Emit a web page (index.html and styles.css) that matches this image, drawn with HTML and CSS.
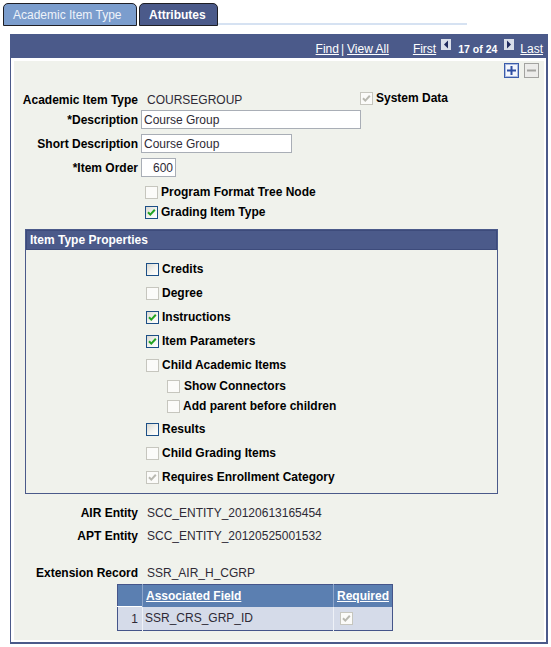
FILE: index.html
```html
<!DOCTYPE html>
<html>
<head>
<meta charset="utf-8">
<title>Attributes</title>
<link rel="stylesheet" href="styles.css">
</head>
<body>
<div class="tabs">
  <div class="tab inactive">Academic Item Type</div>
  <div class="tab active">Attributes</div>
  <div class="tabline"></div>
</div>
<div class="panel">
  <div class="navbar">
    <a class="lnk">Find</a><span class="sep">|</span><a class="lnk">View All</a>
    <a class="lnk first">First</a>
    <span class="arrow prev"><svg width="10" height="11" viewBox="0 0 10 11"><rect x="0" y="0" width="10" height="11" fill="#d9dee9"/><path d="M3 5.5 L7 1.5 L7 9.5 Z" fill="#1f2a5e"/></svg></span>
    <b class="count">17 of 24</b>
    <span class="arrow next"><svg width="10" height="11" viewBox="0 0 10 11"><rect x="0" y="0" width="10" height="11" fill="#d9dee9"/><path d="M7 5.5 L3 1.5 L3 9.5 Z" fill="#1f2a5e"/></svg></span>
    <a class="lnk last">Last</a>
  </div>
  <div class="frame">
    <div class="content">
      <div class="tools">
        <span class="btn add"><svg width="15" height="15" viewBox="0 0 15 15"><rect x="0.5" y="0.5" width="14" height="14" fill="#f4f7fd" stroke="#3b5cab"/><rect x="1.5" y="1.5" width="12" height="12" fill="none" stroke="#aebde0"/><rect x="3" y="6.5" width="9" height="2" fill="#2f4fa2"/><rect x="6.5" y="3" width="2" height="9" fill="#2f4fa2"/></svg></span>
        <span class="btn del"><svg width="15" height="15" viewBox="0 0 15 15"><rect x="0.5" y="0.5" width="14" height="14" fill="#ececea" stroke="#a3a3a0"/><rect x="3" y="6.5" width="9" height="2" fill="#a3a3a0"/></svg></span>
      </div>

      <div class="r1">
        <span class="lbl">Academic Item Type</span>
        <span class="val wide">COURSEGROUP</span>
        <span class="sys">
          <span class="cb dis"><svg width="11" height="11" viewBox="0 0 11 11"><path d="M2 5.2 L4.3 7.6 L8.8 2.8" fill="none" stroke="#b9b9b1" stroke-width="2"/></svg></span>
          <span class="cbl">System Data</span>
        </span>
      </div>

      <div class="irow first-in">
        <span class="lbl">*Description</span>
        <input class="inp desc" type="text" value="Course Group">
      </div>
      <div class="irow">
        <span class="lbl">Short Description</span>
        <input class="inp short" type="text" value="Course Group">
      </div>
      <div class="irow">
        <span class="lbl">*Item Order</span>
        <input class="inp order" type="text" value="600">
      </div>

      <div class="crow first-c">
        <span class="cb dis"></span>
        <span class="cbl">Program Format Tree Node</span>
      </div>
      <div class="crow">
        <span class="cb en"><svg width="11" height="11" viewBox="0 0 11 11"><path d="M2 5.2 L4.3 7.6 L8.8 2.8" fill="none" stroke="#22a422" stroke-width="2"/></svg></span>
        <span class="cbl">Grading Item Type</span>
      </div>

      <div class="box">
        <div class="boxhead">Item Type Properties</div>
        <div class="boxbody">
          <div class="prow">
            <span class="cb en"></span>
            <span class="cbl">Credits</span>
          </div>
          <div class="prow">
            <span class="cb dis"></span>
            <span class="cbl">Degree</span>
          </div>
          <div class="prow">
            <span class="cb en"><svg width="11" height="11" viewBox="0 0 11 11"><path d="M2 5.2 L4.3 7.6 L8.8 2.8" fill="none" stroke="#22a422" stroke-width="2"/></svg></span>
            <span class="cbl">Instructions</span>
          </div>
          <div class="prow">
            <span class="cb en"><svg width="11" height="11" viewBox="0 0 11 11"><path d="M2 5.2 L4.3 7.6 L8.8 2.8" fill="none" stroke="#22a422" stroke-width="2"/></svg></span>
            <span class="cbl">Item Parameters</span>
          </div>
          <div class="prow">
            <span class="cb dis"></span>
            <span class="cbl">Child Academic Items</span>
          </div>
          <div class="prow sub show">
            <span class="cb dis"></span>
            <span class="cbl wide-gap">Show Connectors</span>
          </div>
          <div class="prow sub addp">
            <span class="cb dis"></span>
            <span class="cbl">Add parent before children</span>
          </div>
          <div class="prow">
            <span class="cb en"></span>
            <span class="cbl">Results</span>
          </div>
          <div class="prow">
            <span class="cb dis"></span>
            <span class="cbl">Child Grading Items</span>
          </div>
          <div class="prow">
            <span class="cb dis"><svg width="11" height="11" viewBox="0 0 11 11"><path d="M2 5.2 L4.3 7.6 L8.8 2.8" fill="none" stroke="#b9b9b1" stroke-width="2"/></svg></span>
            <span class="cbl">Requires Enrollment Category</span>
          </div>
        </div>
      </div>

      <div class="drow air">
        <span class="lbl">AIR Entity</span>
        <span class="val">SCC_ENTITY_20120613165454</span>
      </div>
      <div class="drow apt">
        <span class="lbl">APT Entity</span>
        <span class="val">SCC_ENTITY_20120525001532</span>
      </div>
      <div class="drow ext">
        <span class="lbl">Extension Record</span>
        <span class="val">SSR_AIR_H_CGRP</span>
      </div>

      <table class="grid">
        <colgroup>
          <col class="col-num">
          <col class="col-field">
          <col class="col-req">
        </colgroup>
        <tr class="ghead">
          <th class="cnum"></th>
          <th class="cfield"><a class="hl">Associated Field</a></th>
          <th class="creq"><a class="hl">Required</a></th>
        </tr>
        <tr class="grow">
          <td class="cnum">1</td>
          <td class="cfield">SSR_CRS_GRP_ID</td>
          <td class="creq"><span class="cb dis"><svg width="11" height="11" viewBox="0 0 11 11"><path d="M2 5.2 L4.3 7.6 L8.8 2.8" fill="none" stroke="#b9b9b1" stroke-width="2"/></svg></span></td>
        </tr>
      </table>
    </div>
  </div>
</div>
</body>
</html>
```

FILE: styles.css
```css
body {
  margin: 0;
  background: #ffffff;
  font-family: "Liberation Sans", Arial, sans-serif;
  font-size: 12px;
  color: #000000;
  width: 551px;
}

/* Tabs */
.tabs {
  display: flex;
  align-items: flex-end;
  padding: 3px 0 0 3px;
  height: 23px;
}
.tab {
  box-sizing: border-box;
  height: 23px;
  border: 1px solid #1e1e24;
  border-radius: 5px 5px 0 0;
  line-height: 19px;
  padding: 2px 0 0 9px;
  white-space: nowrap;
}
.tab.inactive {
  width: 134px;
  background: #7b9dcd;
  color: #eef3fa;
}
.tab.active {
  width: 79px;
  margin-left: 2px;
  background: #4b5a8a;
  color: #ffffff;
  font-weight: bold;
}
.tabline {
  width: 249px;
  height: 2px;
  margin-bottom: 1px;
  background: #d6e2f2;
}

/* Panel */
.panel {
  margin: 8px 3px 0 10px;
}
.navbar {
  box-sizing: border-box;
  height: 24px;
  background: #4b5a8a;
  display: flex;
  justify-content: flex-end;
  align-items: flex-start;
  padding: 5px 5px 0 0;
  color: #ffffff;
  line-height: 15px;
}
.lnk, .sep, .count {
  margin-top: 3px;
}
.lnk {
  color: #ffffff;
  text-decoration: underline;
}
.sep {
  margin-left: 2px;
  margin-right: 3px;
}
.first {
  margin-left: 24px;
}
.arrow {
  display: block;
  width: 10px;
  height: 11px;
}
.arrow.prev {
  margin-left: 5px;
}
.arrow svg {
  display: block;
}
.count {
  font-weight: bold;
  font-size: 10.5px;
  margin-left: 7px;
  margin-right: 7px;
}
.last {
  margin-left: 6px;
}

.frame {
  border-left: 1px solid #4b5a8a;
  border-right: 2px solid #4b5a8a;
  border-bottom: 2px solid #4b5a8a;
  padding: 3px 2px 2px 3px;
  background: #ffffff;
}
.content {
  background: #f0f2ec;
  padding-bottom: 9px;
}

/* Tools */
.tools {
  display: flex;
  justify-content: flex-end;
  gap: 5px;
  padding: 2px 5px 0 0;
  height: 15px;
}
.btn {
  display: block;
  width: 15px;
  height: 15px;
}
.btn svg {
  display: block;
}

/* Form rows */
.lbl {
  flex: none;
  width: 124px;
  text-align: right;
  font-weight: bold;
  white-space: nowrap;
}
.val {
  margin-left: 9px;
  color: #2e2a36;
  white-space: nowrap;
}
.r1 {
  display: flex;
  align-items: center;
  height: 18px;
  margin-top: 13px;
}
.val.wide {
  width: 213px;
}
.sys {
  align-self: flex-start;
  display: flex;
  align-items: center;
}
.irow {
  display: flex;
  align-items: center;
  height: 19px;
  margin-top: 5px;
}
.irow.first-in {
  margin-top: 1px;
}
.inp {
  box-sizing: border-box;
  height: 19px;
  margin: 0 0 0 3px;
  padding: 0 2px;
  border: 1px solid #a9aeb6;
  background: #ffffff;
  font-family: "Liberation Sans", Arial, sans-serif;
  font-size: 12px;
  color: #2e2a36;
  outline: none;
}
.inp.desc { width: 220px; }
.inp.short { width: 151px; }
.inp.order { width: 35px; text-align: right; }

.crow {
  display: flex;
  align-items: center;
  height: 20px;
  padding-left: 131px;
}
.crow.first-c {
  margin-top: 5px;
}

/* Checkboxes */
.cb {
  box-sizing: border-box;
  flex: none;
  display: flex;
  align-items: center;
  justify-content: center;
  width: 13px;
  height: 13px;
  border: 1px solid #c6c6be;
  background: #fbfbf9;
}
.cb svg {
  display: block;
}
.cb.en {
  border-color: #1c4f86;
  background: linear-gradient(135deg, #d9d9d2 0%, #f4f4f0 55%, #ffffff 100%);
}
.cbl {
  margin-left: 3px;
  font-weight: bold;
  white-space: nowrap;
}
.cbl.wide-gap {
  margin-left: 4px;
}

/* Item Type Properties box */
.box {
  box-sizing: border-box;
  width: 473px;
  margin: 7px 0 0 11px;
  border: 1px solid #4b5a8a;
}
.boxhead {
  height: 20px;
  line-height: 20px;
  padding-left: 4px;
  background: #4b5a8a;
  box-shadow: inset 0 0 0 1px #3d4b7b;
  color: #ffffff;
  font-weight: bold;
}
.boxbody {
  padding: 7px 0 4px 0;
}
.prow {
  display: flex;
  align-items: center;
  height: 24px;
  padding-left: 120px;
}
.prow.sub {
  padding-left: 141px;
}
.prow.show {
  height: 18px;
}
.prow.addp {
  height: 22px;
}

/* Display rows */
.drow {
  display: flex;
  align-items: center;
  height: 20px;
}
.drow.air { margin-top: 9px; }
.drow.apt { margin-top: 3px; }
.drow.ext { margin-top: 17px; }

/* Grid */
.grid {
  margin: 1px 0 0 103px;
  border-collapse: collapse;
  border: 1px solid #45558a;
  width: 275px;
  table-layout: fixed;
}
.col-num { width: 25px; }
.col-field { width: 191px; }
.col-req { width: 59px; }
.grid th, .grid td {
  padding: 0;
  font-size: 12px;
  white-space: nowrap;
  overflow: hidden;
}
.ghead th {
  height: 21px;
  background: #5b7fb1;
  color: #ffffff;
  font-weight: bold;
  text-align: left;
  border-left: 1px solid #8ea6cb;
}
.ghead th.cnum {
  border-left: none;
}
.hl {
  color: #ffffff;
  text-decoration: underline;
}
.ghead .cfield { padding-left: 3px; }
.ghead .creq { padding-left: 3px; }
.grow td {
  height: 23px;
  background: #d5dbe9;
  color: #2e2a36;
  border-left: 1px solid #eef1f7;
}
.grow td.cnum {
  border-left: none;
  border-top: 1px solid #ffffff;
  text-align: right;
  padding-right: 4px;
}
.grow td.cfield {
  padding-left: 2px;
}
.grow td.creq {
  padding-left: 6px;
}
```
